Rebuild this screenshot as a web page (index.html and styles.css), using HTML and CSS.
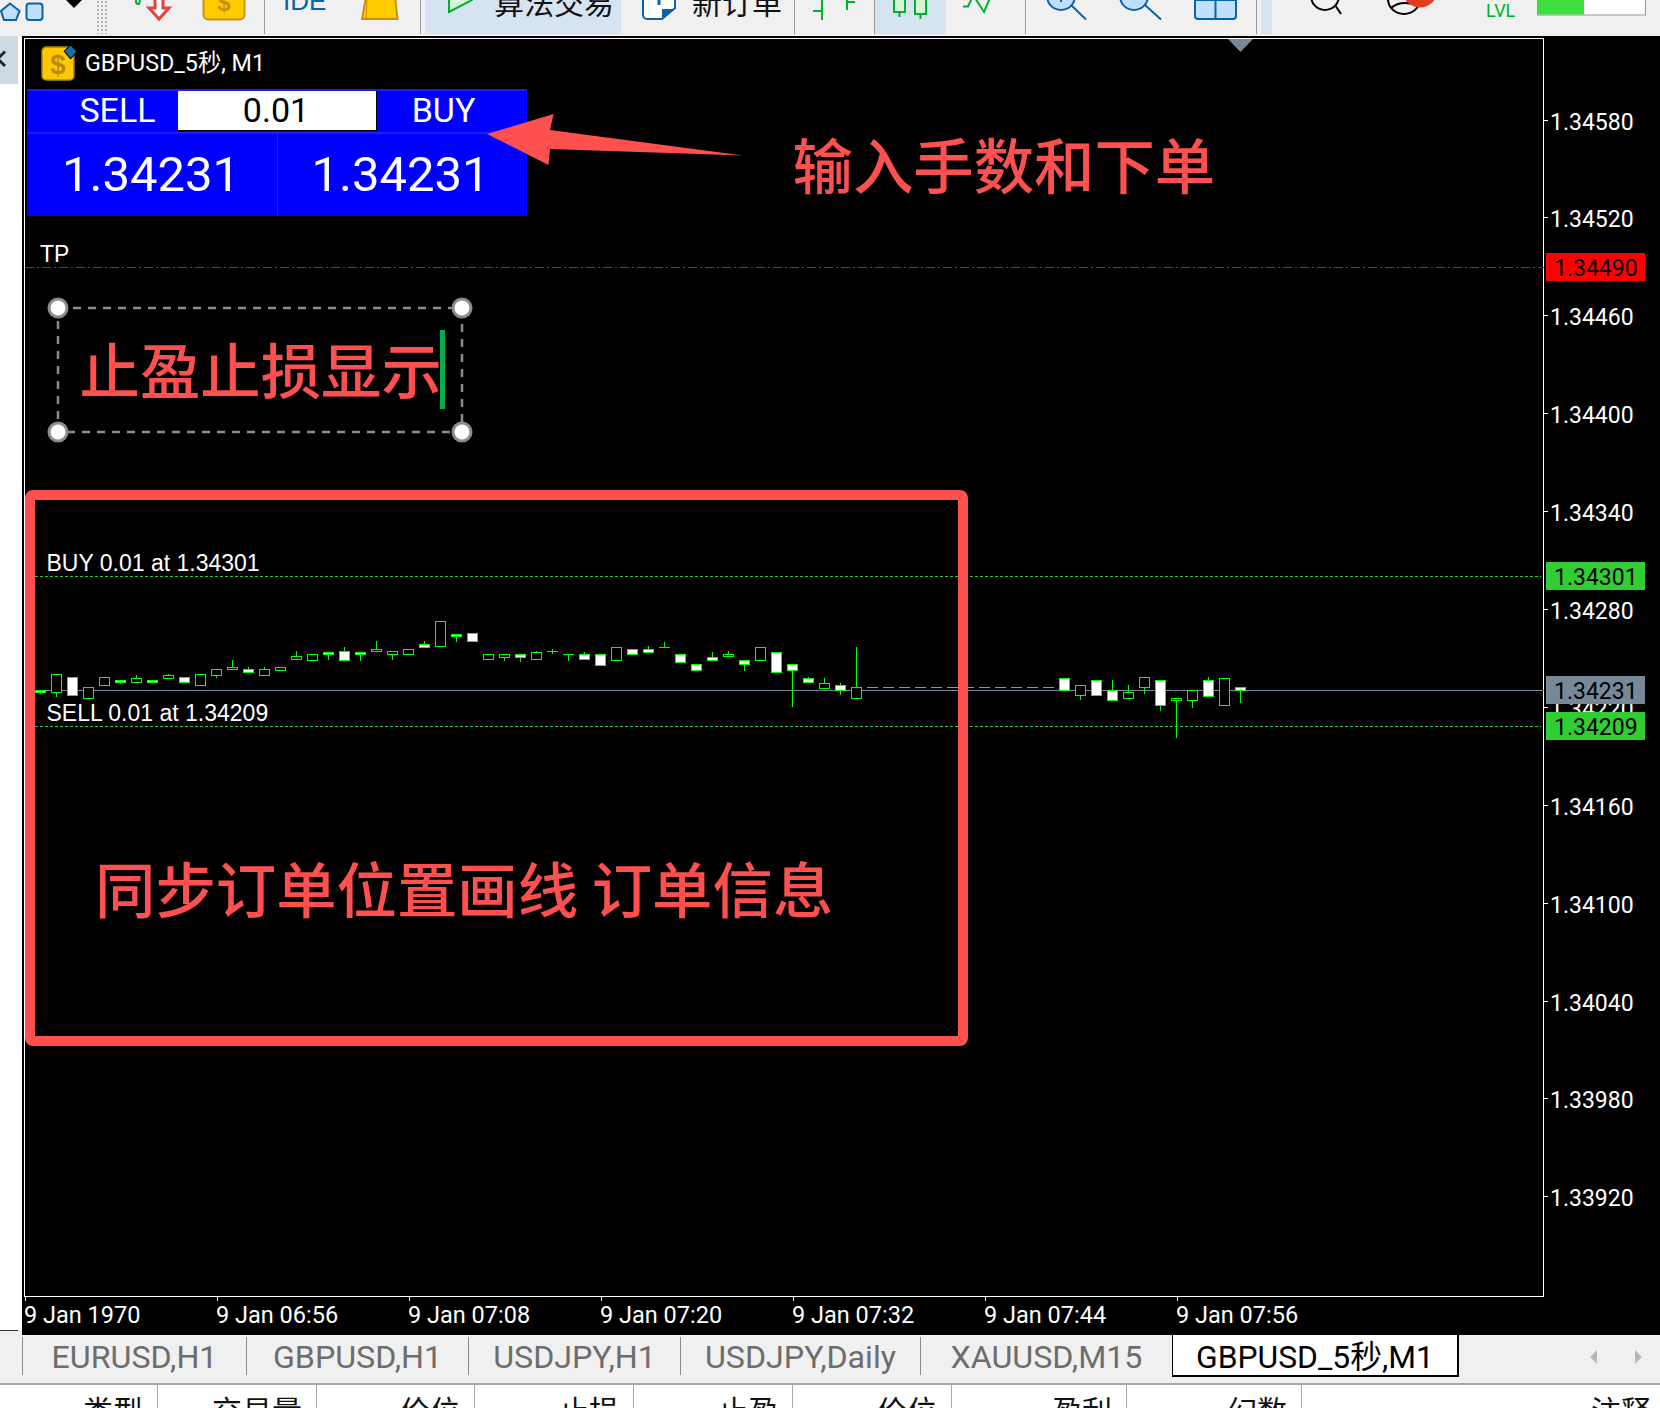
FILE: index.html
```html
<!DOCTYPE html>
<html lang="zh">
<head>
<meta charset="utf-8">
<title>GBPUSD_5秒, M1</title>
<link rel="stylesheet" href="styles.css">
</head>
<body>
<header class="toolbar">
  <div class="tb t1"><svg width="96" height="34" viewBox="0 0 96 34">
    <polygon class="blue" points="10,3.5 19.5,11 16,20 4,20 1,11"/>
    <rect class="blue" x="26.5" y="3.5" width="16" height="16.5" rx="3"/>
    <polygon points="66,0 82,0 74,8" fill="#000"/>
  </svg></div>
  <div class="grip"></div>
  <div class="tb t2 sep"><svg width="157" height="34" viewBox="107 0 157 34">
    <path d="M136.5,0 A2.5,2.5 0 0 0 139,4 L140,0" fill="none" stroke="#00b030" stroke-width="2"/>
    <polygon points="155,-2 155,8 149,8 159,19 169,8 163,8 163,-2" fill="#fff" stroke="#e8413c" stroke-width="3"/>
    <rect x="203.500" y="-10" width="41" height="29.500" rx="5" fill="#ffcc00" stroke="#c8900c" stroke-width="2"/>
    <text x="224" y="11" class="dollar">$</text>
  </svg></div>
  <div class="tb t3 sep"><svg width="155" height="34" viewBox="265 0 155 34">
    <text x="283" y="10" class="ide">IDE</text>
    <polygon points="366,-3 395,-3 397.500,19 362,19" fill="#ffcc00" stroke="#c8900c" stroke-width="2"/>
    <path d="M367,0 L366,19" stroke="#c8900c" stroke-width="1"/>
  </svg></div>
  <div class="tb t4 sel"><svg width="48" height="34" viewBox="425 0 48 34">
    <polygon points="449,-8 449,12 472,0" fill="#d8f5d8" stroke="#00b030" stroke-width="2"/>
  </svg><span class="tb-text t4-text">算法交易</span></div>
  <div class="tb t5 sep"><svg width="34" height="34" viewBox="642 0 34 34">
    <path d="M643,-5 V15 a4,4 0 0 0 4,4 H662 L675,8 V-5 Z" fill="#fff" stroke="#0a63a8" stroke-width="2"/>
    <path d="M662,19 V9 H675 Z" fill="#0a63a8"/>
    <path d="M659,0 V5" stroke="#0a63a8" stroke-width="3"/>
  </svg><span class="tb-text t5-text">新订单</span></div>
  <div class="tb t6 sep"><svg width="79" height="34" viewBox="795 0 79 34">
    <path d="M822,0 V20 M813,11 H822 M847,0 V10 M847,2 H855" fill="none" stroke="#00b030" stroke-width="2"/>
  </svg></div>
  <div class="tb t7 sel"><svg width="71" height="34" viewBox="875 0 71 34">
    <rect x="894" y="-3" width="11" height="15" fill="#d8f5d8" stroke="#00b030" stroke-width="2"/>
    <rect x="915" y="-3" width="11" height="17" fill="#d8f5d8" stroke="#00b030" stroke-width="2"/>
    <path d="M899.500,12 V17 M920.500,14 V19" stroke="#00b030" stroke-width="2"/>
  </svg></div>
  <div class="tb t8 sep"><svg width="79" height="34" viewBox="946 0 79 34">
    <polyline points="963,6.500 968,6.500 972,-2" fill="none" stroke="#00b030" stroke-width="2"/>
    <polyline points="975,-2 984,12 990,-2" fill="none" stroke="#00b030" stroke-width="2"/>
  </svg></div>
  <div class="tb t9 sep"><svg width="230" height="34" viewBox="1026 0 230 34">
    <circle class="blue" cx="1061" cy="-4" r="14"/>
    <path d="M1071,5 L1086,19.500 M1061,-2 V2" stroke="#0a63a8" stroke-width="2" fill="none"/>
    <circle class="blue" cx="1134" cy="-4" r="14"/>
    <path d="M1145,5 L1161,19.500" stroke="#0a63a8" stroke-width="2" fill="none"/>
    <rect class="blue" x="1195" y="-6" width="41" height="25" rx="3"/>
    <path d="M1215.500,-6 V19 M1195,0 H1236" stroke="#0a63a8" stroke-width="2"/>
  </svg></div>
  <div class="t10"></div>
  <div class="tb t11"><svg width="388" height="34" viewBox="1272 0 388 34">
    <circle cx="1325" cy="-4" r="14" fill="none" stroke="#000" stroke-width="2"/>
    <path d="M1335,5 L1341,14" stroke="#000" stroke-width="2"/>
    <ellipse cx="1404" cy="-1" rx="16" ry="15" fill="none" stroke="#000" stroke-width="2"/>
    <path d="M1391,8 Q1400,0 1417,5" fill="none" stroke="#000" stroke-width="2"/>
    <circle cx="1420" cy="-10" r="17.500" fill="#e53b1e"/>
    <text x="1486" y="17" class="lvl">LVL</text>
    <rect x="1537.500" y="-3" width="108" height="18" fill="#fff" stroke="#999"/>
    <rect x="1538" y="-3" width="46" height="17.500" fill="#3fdf3f"/>
  </svg></div>
</header>

<main class="main">
  <aside class="left">
    <div class="left-tab">✕</div>
    <div class="left-body"></div>
    <div class="left-foot"></div>
  </aside>
  <section class="chart">
    <div class="chart-top">
      <div class="plot">
        <svg id="plot-svg" class="plot-svg" viewBox="25 39 1519 1257" xmlns="http://www.w3.org/2000/svg">
          <line x1="25" x2="1544" y1="267.500" y2="267.500" class="tp-line"/>
          <text x="40" y="261.500" class="order-label">TP</text>
          <line x1="25" x2="1541" y1="576.500" y2="576.500" class="order-line"/>
          <line x1="25" x2="1541" y1="726.500" y2="726.500" class="order-line"/>
          <line x1="25" x2="1544" y1="690.500" y2="690.500" class="price-line"/>
          <text x="46.500" y="570.500" class="order-label">BUY 0.01 at 1.34301</text>
          <text x="46.500" y="720.500" class="order-label">SELL 0.01 at 1.34209</text>
          <g id="candles" shape-rendering="crispEdges"></g>
          <polygon points="1228,39 1253,39 1240.500,52" fill="#778899"/>

          <text x="792.500" y="189" class="note">输入手数和下单</text>

          <rect x="58" y="308" width="404" height="124" class="text-box"/>
          <text x="79.500" y="394" class="note">止盈止损显示</text>
          <rect x="440" y="330" width="5" height="79" fill="#00b050"/>
          <circle cx="58" cy="308" r="9" class="handle"/>
          <circle cx="462" cy="308" r="9" class="handle"/>
          <circle cx="58" cy="432" r="9" class="handle"/>
          <circle cx="462" cy="432" r="9" class="handle"/>

          <rect x="30" y="495" width="933" height="546" rx="3" class="red-box"/>
          <text x="95" y="913" class="note">同步订单位置画线 订单信息</text>
        </svg>
        <div class="title">
          <svg width="36" height="36" viewBox="0 0 34 34">
            <rect x="1" y="2" width="30" height="31" rx="4" fill="#ffc800" stroke="#b98a10" stroke-width="1.500"/>
            <text x="16" y="27" class="title-dollar">$</text>
            <polygon points="28,0 34,6 28,13 22,6" fill="#1a6fa8" stroke="#000" stroke-width="1"/>
          </svg>
          <span class="title-text">GBPUSD_5秒, M1</span>
        </div>
        <div class="trade">
          <div class="trade-row trade-row-top">
            <div class="trade-cell sell">SELL</div>
            <div class="trade-input">0.01</div>
            <div class="trade-cell buy">BUY</div>
          </div>
          <div class="trade-row trade-row-bottom">
            <div class="trade-price price-a">1.34231</div>
            <div class="trade-price price-b">1.34231</div>
          </div>
        </div>
        <svg class="plot-svg" viewBox="25 39 1519 1257" xmlns="http://www.w3.org/2000/svg">
          <polygon class="red-fill" points="487,134 553.600,114 550,130 743,155.500 550,149 548.500,165"/>
        </svg>
      </div>
      <div class="axis">
        <span class="tick">1.34580</span>
        <span class="tick">1.34520</span>
        <span class="tick">1.34460</span>
        <span class="tick">1.34400</span>
        <span class="tick">1.34340</span>
        <span class="tick">1.34280</span>
        <span class="tick">1.34220</span>
        <span class="tick">1.34160</span>
        <span class="tick">1.34100</span>
        <span class="tick">1.34040</span>
        <span class="tick">1.33980</span>
        <span class="tick">1.33920</span>
        <span class="badge badge-red">1.34490</span>
        <span class="badge badge-green badge-buy">1.34301</span>
        <span class="badge badge-gray">1.34231</span>
        <span class="badge badge-green badge-sell">1.34209</span>
      </div>
    </div>
    <div class="time-axis">
      <span class="time">9 Jan 1970</span>
      <span class="time">9 Jan 06:56</span>
      <span class="time">9 Jan 07:08</span>
      <span class="time">9 Jan 07:20</span>
      <span class="time">9 Jan 07:32</span>
      <span class="time">9 Jan 07:44</span>
      <span class="time">9 Jan 07:56</span>
    </div>
  </section>
</main>

<nav class="tabs">
  <div class="tab tab-1">EURUSD,H1</div>
  <div class="tab tab-2">GBPUSD,H1</div>
  <div class="tab tab-3">USDJPY,H1</div>
  <div class="tab tab-4">USDJPY,Daily</div>
  <div class="tab tab-5">XAUUSD,M15</div>
  <div class="tab-active">GBPUSD_5秒,M1</div>
  <div class="tab-arrows">
    <svg width="8" height="14" viewBox="0 0 8 14"><polygon points="7,0 7,14 0,7" fill="#b8b8b8"/></svg>
    <svg width="8" height="14" viewBox="0 0 8 14"><polygon points="1,0 1,14 8,7" fill="#b8b8b8"/></svg>
  </div>
</nav>

<div class="table-head">
  <div class="th">类型</div>
  <div class="th">交易量</div>
  <div class="th">价位</div>
  <div class="th">止损</div>
  <div class="th">止盈</div>
  <div class="th">价位</div>
  <div class="th">盈利</div>
  <div class="th">幻数</div>
  <div class="th th-last">注释</div>
</div>
<script src="chart.js"></script>
</body>
</html>
```
FILE: styles.css
```css
* { box-sizing: border-box; }
html, body { margin: 0; padding: 0; }
body {
  width: 1660px;
  height: 1408px;
  overflow: hidden;
  background: #f0f0f0;
  font-family: Roboto, "Noto Sans CJK SC", sans-serif;
}

/* toolbar */
.toolbar { display: flex; height: 36px; padding-bottom: 2px; background: #f0f0f0; overflow: hidden; }
.tb { display: flex; flex: none; height: 34px; }
.tb svg { display: block; flex: none; }
.sep { border-right: 1px solid #9a9a9a; }
.sel { background: #d6e4f2; }
.blue { fill: #bfe0ff; stroke: #0a63a8; stroke-width: 2; }
.t1 { width: 96px; }
.grip { flex: none; width: 11px; height: 34px; background: radial-gradient(circle, #b4b4b4 1px, transparent 1.2px) 0 0 / 4px 4px; }
.t2 { width: 158px; }
.t3 { width: 156px; }
.t4 { width: 196px; margin-left: 4px; }
.t5 { width: 174px; padding-left: 21px; }
.t6 { width: 80px; }
.t7 { width: 71px; }
.t8 { width: 80px; }
.t9 { width: 231px; }
.t10 { flex: none; width: 11px; height: 34px; margin-left: 4px; background: #d6e4f2; }
.t11 { flex: 1; }
.tb-text { display: block; font: 30px/30px "Noto Sans CJK SC", sans-serif; color: #111; margin-top: -14px; white-space: nowrap; }
.t4-text { margin-left: 21px; }
.t5-text { margin-left: 16px; }
.dollar { font: bold 24px "Liberation Sans", sans-serif; fill: #c8900c; text-anchor: middle; }
.ide { font: 26px "Liberation Sans", sans-serif; fill: #0a63a8; }
.lvl { font: 18px Roboto, sans-serif; fill: #00b030; }

/* main area */
.main { display: flex; height: 1299px; }
.left { display: flex; flex-direction: column; flex: none; width: 22px; background: #fff; }
.left-tab { width: 18px; height: 48px; background: #ced9e2; color: #222; font: bold 28px/48px "DejaVu Sans", sans-serif; text-indent: -14px; overflow: hidden; white-space: nowrap; }
.left-body { flex: 1; border-bottom: 1px solid #333; width: 18px; }
.left-foot { height: 4px; background: #f0f0f0; }

.chart { display: flex; flex-direction: column; flex: 1; padding: 2px 0 0 2px; background: #000; color: #fff; }
.chart-top { display: flex; flex: none; height: 1259px; }
.plot { position: relative; flex: none; width: 1520px; border: 1px solid #fff; }
.plot-svg { position: absolute; left: 0; top: 0; width: 1519px; height: 1257px; display: block; overflow: visible; pointer-events: none; }

.tp-line { stroke: #ff0000; stroke-width: 1; stroke-dasharray: 9 3 2 3; }
.order-line { stroke: #2ecc2e; stroke-width: 1; stroke-dasharray: 3 2; }
.price-line { stroke: #778899; stroke-width: 1; }
.order-label { font: 23px "Liberation Sans", sans-serif; fill: #fff; }
.note { font: 500 60.400px "Noto Sans CJK SC", sans-serif; fill: #ff5050; }
.red-fill { fill: #ff5050; }
.red-box { fill: none; stroke: #ff5050; stroke-width: 10; }
.text-box { fill: none; stroke: #8c8c8c; stroke-width: 2.500; stroke-dasharray: 8 7; }
.handle { fill: #fff; stroke: #8c8c8c; stroke-width: 3; }

.title { position: absolute; left: 16px; top: 6px; display: flex; align-items: center; gap: 8px; font-size: 23.300px; line-height: 36px; white-space: nowrap; }
.title svg { display: block; flex: none; }
.title-dollar { font: bold 26px "Liberation Sans", sans-serif; fill: #b98a10; text-anchor: middle; }

.trade { position: absolute; left: 2px; top: 50px; width: 500px; height: 127px; background: #0000ff; display: flex; flex-direction: column; }
.trade-row { display: flex; border-top: 2px solid #1c1cff; }
.trade-row-top { height: 43px; font-size: 34px; }
.trade-row-bottom { flex: 1; font-size: 49px; }
.trade-cell { line-height: 39px; text-align: center; }
.sell { width: 151px; padding-left: 30px; }
.buy { flex: 1; padding-right: 17px; }
.trade-input { width: 199px; height: 40px; line-height: 39px; background: #fff; color: #000; text-align: center; border-right: 1px solid #000; border-bottom: 1px solid #000; padding-right: 2px; }
.trade-price { line-height: 82px; text-align: center; }
.price-a { width: 251px; border-right: 1px solid #1c1cff; padding-right: 2px; }
.price-b { flex: 1; padding-right: 4px; }

/* price axis */
.axis { position: relative; display: flex; flex-direction: column; flex: 1; padding-top: 35.500px; font-size: 23px; }
.tick { position: relative; flex: none; height: 97.900px; line-height: 97.900px; padding-left: 6px; }
.tick::before { content: ""; position: absolute; left: 0; top: 46px; width: 4px; height: 1px; background: #fff; }
.badge { position: absolute; left: 2px; width: 99px; height: 28px; line-height: 31px; padding-left: 8px; color: #000; }
.badge-red { top: 215px; background: #ff0000; }
.badge-green { background: #32cd32; }
.badge-buy { top: 524px; }
.badge-gray { top: 638px; background: #778899; }
.badge-sell { top: 674px; }

/* time axis */
.time-axis { display: flex; height: 38px; padding-left: 1px; font-size: 23.500px; }
.time { position: relative; flex: none; width: 192px; line-height: 36px; white-space: nowrap; text-indent: -1px; }
.time::before { content: ""; position: absolute; left: 0; top: 0; width: 1px; height: 4px; background: #fff; }

/* tabs */
.tabs { display: flex; height: 48px; padding-left: 22px; background: #f0f0f0; font-size: 32.200px; color: #6d6d6d; }
.tab { flex: none; height: 38px; margin-top: 2px; line-height: 40px; text-align: center; border-right: 1px solid #8c8c8c; white-space: nowrap; }
.tab-1 { width: 225px; border-left: 1px solid #8c8c8c; }
.tab-2 { width: 222px; }
.tab-3 { width: 212px; }
.tab-4 { width: 240px; }
.tab-5 { width: 251px; border-right: 0; }
.tab-active { flex: none; width: 287px; height: 43px; margin-top: -1px; line-height: 44px; text-align: center; font-size: 31.800px; color: #000; background: #fff; border: 1px solid #000; border-width: 1px 2px 2px 1px; white-space: nowrap; }
.tab-arrows { flex: 1; display: flex; justify-content: flex-end; gap: 36px; padding: 15px 18px 0 0; }
.tab-arrows svg { display: block; }

/* table header */
.table-head { display: grid; grid-template-columns: 158px 159px 158px 159px 159px 159px 175px 175px 1fr; height: 25px; background: #fff; border-top: 2px solid #a8a8a8; overflow: hidden; }
.th { height: 40px; padding: 4px 14px 0 0; border-right: 1px solid #a8a8a8; text-align: right; font: 30px/40px "Noto Sans CJK SC", sans-serif; color: #111; }
.th-last { border-right: 0; padding-right: 9px; }
```
FILE: chart.js
```js
// Candles: [index, bodyTop, bodyBottom, filled, wickTop, wickBottom], measured per block.
var blocks = [
  { base: 540, rows: [
    [0,452,458,1,0,461],[1,403,457,0,0,470],[2,412,466,1],[3,442,475,0],[4,412,436,0],
    [5,421,428,1,0,431],[6,415,427,0,406,0],[7,421,428,1],[8,406,415,0,403,0],[9,412,427,1],
    [10,403,436,0],[11,388,406,0,0,413],[12,382,388,0,361,0],[13,388,397,1,382,0],[14,388,406,0,381,0],
    [15,382,391,0],[16,349,358,0,334,0],[17,343,361,0],[18,337,343,1,0,358],[19,334,361,1,322,0],
    [20,337,343,1,0,362],[21,328,334,0,304,0],[22,334,343,0,0,358],[23,328,343,0],[24,313,322,1,304,0],
    [25,244,319,0],[26,283,289,1,0,305]
  ]},
  { base: 600, rows: [
    [27,100,125,1],[28,163,179,0],[29,163,172,0,0,180],[30,163,172,1,0,183],[31,157,179,0,153,0],
    [32,154,154,0,147,160],[33,163,163,0,0,180],[34,163,179,1,156,0],[35,163,197,1],[36,142,182,0],
    [37,148,163,1],[38,148,158,1,138,0],[39,142,142,0,126,0],[40,163,188,1],[41,193,212,1],
    [42,172,182,1,156,0],[43,163,170,0,153,0],[44,181,194,1,0,210],[45,142,182,0],[46,157,218,1],
    [47,193,212,1,0,318],[48,235,248,1,231,0],[49,250,266,0,234,0],[50,256,272,1,249,282],[51,262,296,0,141,0]
  ]},
  { base: 660, rows: [
    [52,82,82,0],[53,82,82,0],[54,82,82,0],[55,82,82,0],[56,82,82,0],[57,82,82,0],
    [58,82,82,0],[59,82,82,0],[60,82,82,0],[61,82,82,0],[62,82,82,0],[63,82,82,0],
    [64,55,92,1],[65,76,107,0,0,117],[66,61,107,1],[67,91,122,1,60,0],[68,97,116,0,75,0],
    [69,52,83,0,0,99],[70,61,137,1,0,150],[71,115,122,0,0,231],[72,91,122,0,0,141],
    [73,61,110,1,52,0],[74,55,137,0],[75,82,91,1,0,126]
  ]}
];

var NS = "http://www.w3.org/2000/svg";
var layer = document.getElementById("candles");

function add(name, attrs) {
  var el = document.createElementNS(NS, name);
  for (var k in attrs) el.setAttribute(k, attrs[k]);
  layer.appendChild(el);
}

blocks.forEach(function (block) {
  function py(z) { return Math.floor(block.base + z / 3); }
  block.rows.forEach(function (c) {
    var x = 40 + 16 * c[0];
    var top = py(c[1]), bottom = py(c[2]);
    var cx = x + 0.5;
    var wickTop = c[4] ? py(c[4]) : top;
    var wickBottom = c[5] ? py(c[5]) : bottom;
    if (wickTop !== wickBottom) {
      add("line", { x1: cx, x2: cx, y1: wickTop, y2: wickBottom + 1, stroke: "#00ff00" });
    }
    if (top === bottom) {
      add("line", { x1: x - 5, x2: x + 6, y1: top + 0.5, y2: top + 0.5, stroke: "#00ff00" });
    } else {
      add("rect", {
        x: x - 4.5, y: top + 0.5, width: 10, height: bottom - top,
        fill: c[3] ? "#fff" : "#000", stroke: "#00ff00"
      });
    }
  });
});
```
